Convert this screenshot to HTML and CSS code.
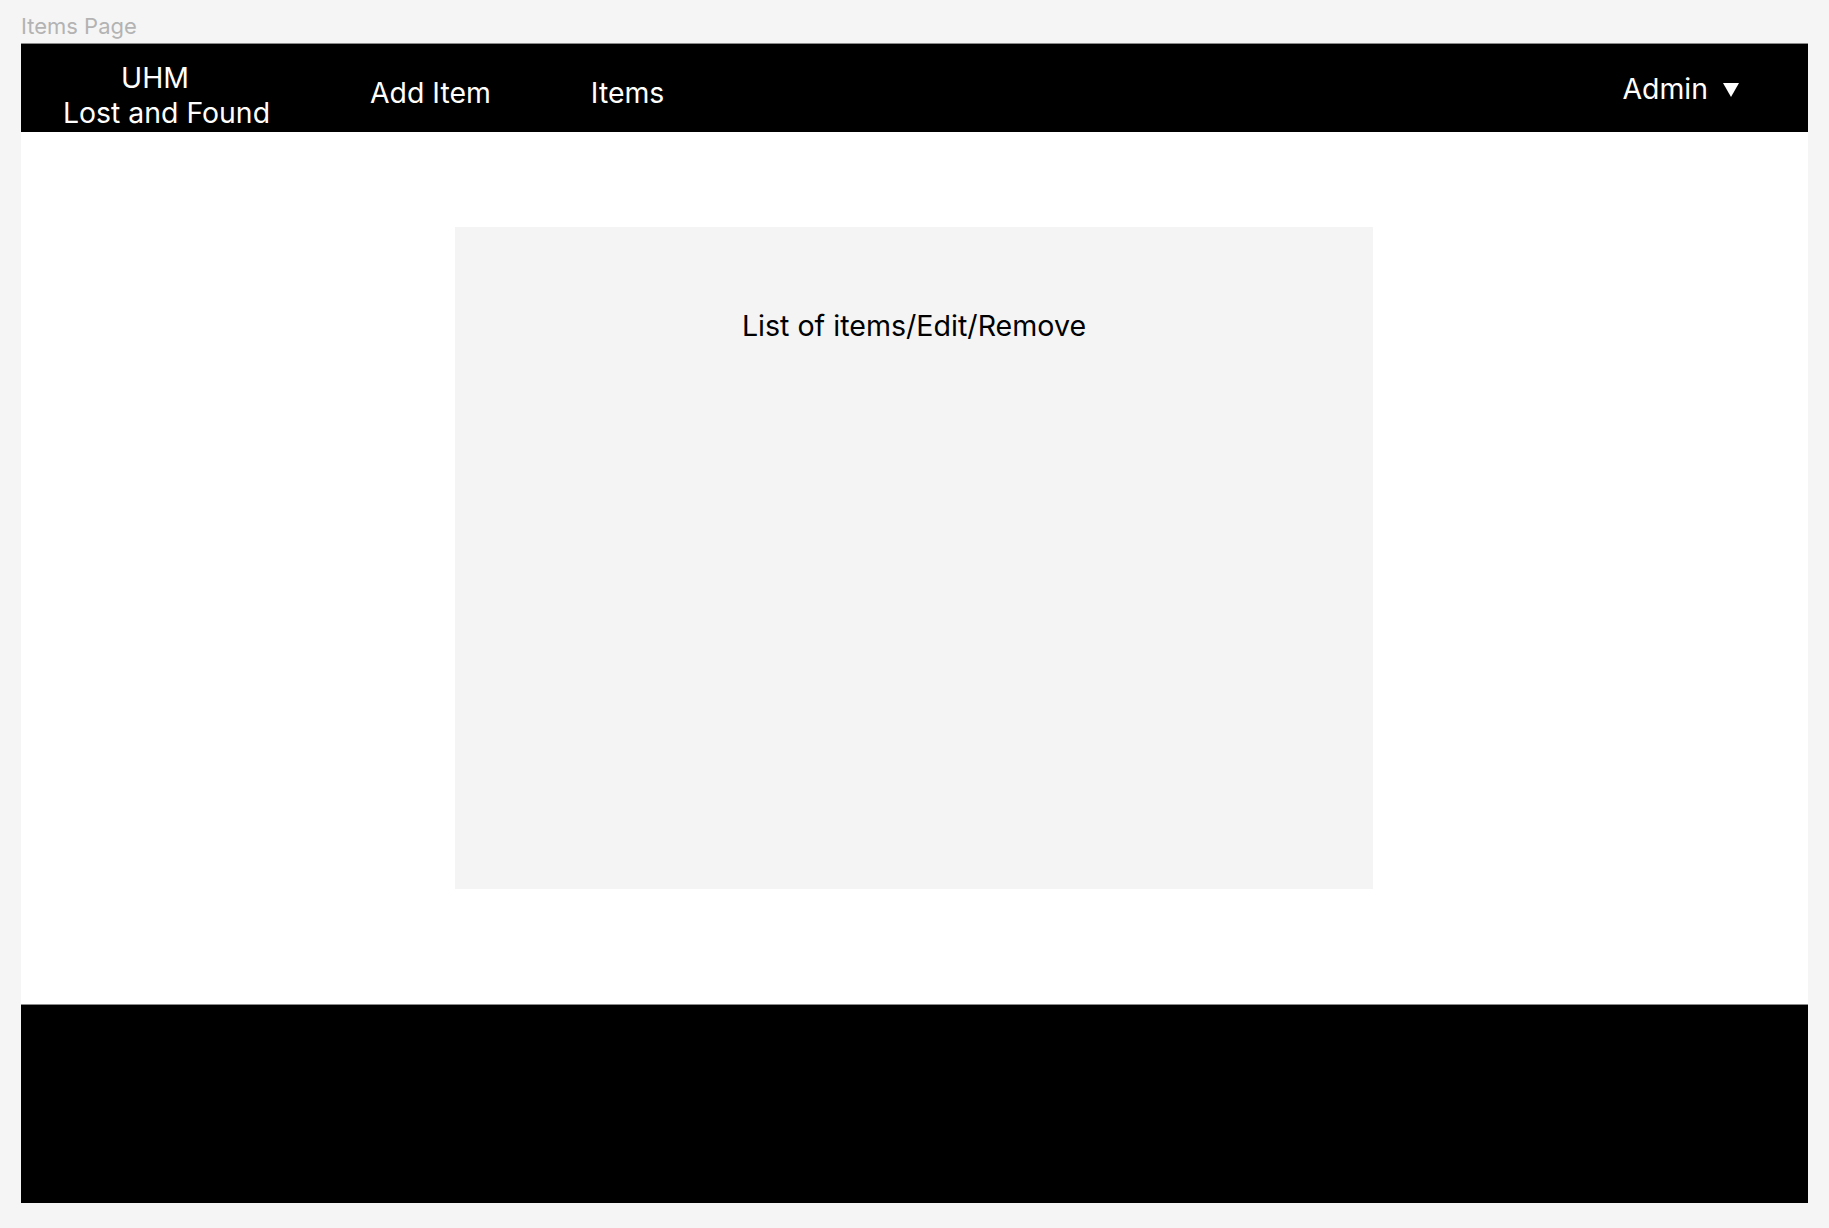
FILE: index.html
```html
<!DOCTYPE html>
<html lang="en">
<head>
<meta charset="utf-8">
<title>Items Page</title>
<link rel="stylesheet" href="styles.css">
</head>
<body>
<div class="page-label">Items Page</div>
<div class="frame">
  <nav class="navbar">
    <div class="brand">
      <span class="brand-top">UHM</span>
      <span class="brand-bottom">Lost and Found</span>
    </div>
    <a class="nav-link add" href="#">Add Item</a>
    <a class="nav-link items" href="#">Items</a>
    <div class="admin">
      <span>Admin</span>
      <svg class="caret" width="16" height="14" viewBox="0 0 16 14"><path d="M0 0 H16 L8 14 Z" fill="#fff"/></svg>
    </div>
  </nav>
  <main class="content">
    <section class="panel">
      <p class="panel-title">List of items/Edit/Remove</p>
    </section>
  </main>
  <footer class="footer"></footer>
</div>
</body>
</html>
```

FILE: styles.css
```css
* { box-sizing: border-box; }
html, body { margin: 0; padding: 0; }
body {
  background: #f5f5f5;
  font-family: Inter, "Noto Sans", sans-serif;
  height: 1228px;
  overflow: hidden;
}
.page-label {
  height: 43px;
  padding: 13px 0 0 21px;
  font-size: 22px;
  line-height: 26px;
  color: #b3b3b3;
}
.frame {
  margin-left: 21px;
  width: 1787px;
  background: #fff;
}
.navbar {
  height: 89px;
  background: #000;
  border-top: 1px solid #8a8a8a;
  display: flex;
  align-items: flex-start;
  color: #fff;
  font-size: 28.4px;
  line-height: 35px;
}
.brand {
  display: flex;
  flex-direction: column;
  padding: 16px 0 0 42px;
}
.brand-top { padding-left: 58px; }
.nav-link {
  color: #fff;
  text-decoration: none;
  padding-top: 31px;
}
.nav-link.add { margin-left: 100px; }
.nav-link.items { margin-left: 100px; }
.admin {
  margin-left: auto;
  margin-right: 69px;
  padding-top: 27px;
  display: flex;
  align-items: center;
  gap: 15px;
}
.caret { margin-top: 3px; }
.content {
  height: 872px;
  padding-top: 95px;
  display: flex;
  justify-content: center;
}
.panel {
  width: 918px;
  height: 662px;
  background: #f4f4f4;
  margin-left: -1px;
}
.panel-title {
  margin: 81px 0 0;
  text-align: center;
  font-size: 28.6px;
  line-height: 35px;
  color: #000;
}
.footer {
  height: 199px;
  background: #000;
  border-top: 1px solid #8a8a8a;
}
```
